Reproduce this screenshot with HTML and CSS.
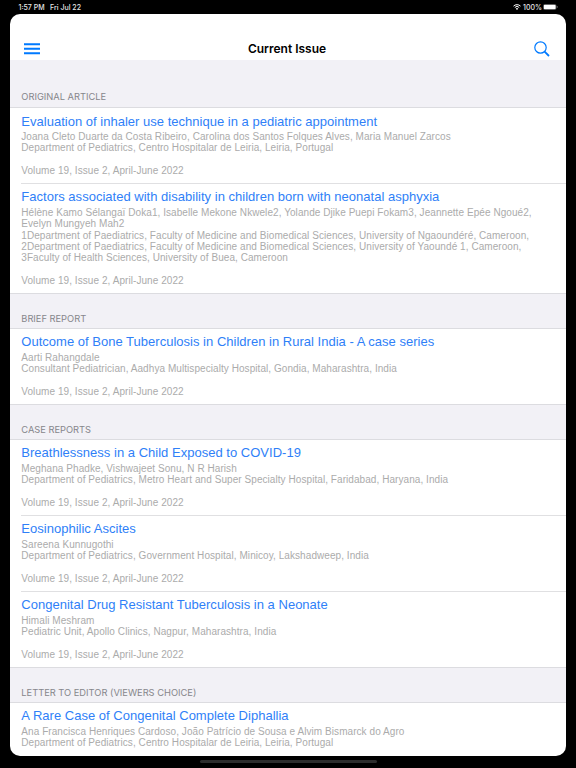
FILE: index.html
```html
<!DOCTYPE html>
<html lang="en">
  <head>
    <meta charset="utf-8" />
    <title>Current Issue</title>
    <link rel="stylesheet" href="styles.css">
  </head>
  <body>
    <div class="status-bar">
      <span class="time">1:57 PM</span>
      <span class="date">Fri Jul 22</span>
      <svg class="wifi" viewBox="0 0 16 12">
        <path d="M1 4.2a10 10 0 0 1 14 0M3.6 6.9a6.2 6.2 0 0 1 8.8 0" fill="none" stroke="#fff" stroke-width="2" />
        <path d="M8 11.8L5.6 9.3a3.4 3.4 0 0 1 4.8 0z" fill="#fff" />
      </svg>
      <span class="percent">100%</span>
      <svg class="battery" viewBox="0 0 15 6">
        <rect x="0.3" y="0.3" width="12.9" height="5.4" rx="1.6" fill="#000" stroke="#777" stroke-width="0.5" />
        <rect x="0.8" y="0.7" width="11.9" height="4.6" rx="1.1" fill="#fff" />
        <rect x="13.8" y="2" width="0.8" height="2" rx="0.4" fill="#777" />
      </svg>
    </div>
    <div class="screen">
      <header class="site-header">
        <svg class="menu-icon" viewBox="0 0 16 12">
          <path d="M0 1.3h16M0 5.8h16M0 10.3h16" />
        </svg>
        <h1 class="site-title">Current Issue</h1>
        <svg class="search-icon" viewBox="0 0 16 16">
          <circle cx="6.5" cy="6.5" r="5.7" />
          <path d="M10.6 10.6L15 15" class="handle" />
        </svg>
      </header>
      <main>
        <h2 class="section-title first">ORIGINAL ARTICLE</h2>
        <section class="articles">
          <article>
            <h3><a href="#">Evaluation of inhaler use technique in a pediatric appointment</a></h3>
            <p>Joana Cleto Duarte da Costa Ribeiro, Carolina dos Santos Folques Alves, Maria Manuel Zarcos<br>Department of Pediatrics, Centro Hospitalar de Leiria, Leiria, Portugal</p>
            <p class="issue">Volume 19, Issue 2, April-June 2022</p>
          </article>
          <article>
            <h3><a href="#">Factors associated with disability in children born with neonatal asphyxia</a></h3>
            <p>Hélène Kamo Sélangaï Doka1, Isabelle Mekone Nkwele2, Yolande Djike Puepi Fokam3, Jeannette Epée Ngoué2,<br>Evelyn Mungyeh Mah2<br>1Department of Paediatrics, Faculty of Medicine and Biomedical Sciences, University of Ngaoundéré, Cameroon,<br>2Department of Paediatrics, Faculty of Medicine and Biomedical Sciences, University of Yaoundé 1, Cameroon,<br>3Faculty of Health Sciences, University of Buea, Cameroon</p>
            <p class="issue">Volume 19, Issue 2, April-June 2022</p>
          </article>
        </section>
        <h2 class="section-title">BRIEF REPORT</h2>
        <section class="articles">
          <article>
            <h3><a href="#">Outcome of Bone Tuberculosis in Children in Rural India - A case series</a></h3>
            <p>Aarti Rahangdale<br>Consultant Pediatrician, Aadhya Multispecialty Hospital, Gondia, Maharashtra, India</p>
            <p class="issue">Volume 19, Issue 2, April-June 2022</p>
          </article>
        </section>
        <h2 class="section-title">CASE REPORTS</h2>
        <section class="articles">
          <article>
            <h3><a href="#">Breathlessness in a Child Exposed to COVID-19</a></h3>
            <p>Meghana Phadke, Vishwajeet Sonu, N R Harish<br>Department of Pediatrics, Metro Heart and Super Specialty Hospital, Faridabad, Haryana, India</p>
            <p class="issue">Volume 19, Issue 2, April-June 2022</p>
          </article>
          <article>
            <h3><a href="#">Eosinophilic Ascites</a></h3>
            <p>Sareena Kunnugothi<br>Department of Pediatrics, Government Hospital, Minicoy, Lakshadweep, India</p>
            <p class="issue">Volume 19, Issue 2, April-June 2022</p>
          </article>
          <article>
            <h3><a href="#">Congenital Drug Resistant Tuberculosis in a Neonate</a></h3>
            <p>Himali Meshram<br>Pediatric Unit, Apollo Clinics, Nagpur, Maharashtra, India</p>
            <p class="issue">Volume 19, Issue 2, April-June 2022</p>
          </article>
        </section>
        <h2 class="section-title">LETTER TO EDITOR (VIEWERS CHOICE)</h2>
        <section class="articles last">
          <article>
            <h3><a href="#">A Rare Case of Congenital Complete Diphallia</a></h3>
            <p>Ana Francisca Henriques Cardoso, João Patrício de Sousa e Alvim Bismarck do Agro<br>Department of Pediatrics, Centro Hospitalar de Leiria, Leiria, Portugal</p>
          </article>
        </section>
      </main>
    </div>
    <div class="home-bar"></div>
  </body>
</html>
```

FILE: styles.css
```css
* {
  box-sizing: border-box;
}
body,
h1,
h2,
h3,
p {
  margin: 0;
  padding: 0;
}
body {
  height: 768px;
  background-color: #000;
  overflow: hidden;
  font-family: "Liberation Sans", Arial, sans-serif;
}

.status-bar {
  display: flex;
  align-items: center;
  height: 14px;
  padding: 0 18px 0 18.5px;
  color: #e6e6e6;
  font-family: Inter, sans-serif;
  font-size: 7px;
  font-weight: 500;
}
.date {
  margin-left: 5.5px;
}
.wifi {
  width: 8px;
  height: 6px;
  margin-left: auto;
}
.percent {
  margin: 0 1px 0 2px;
}
.battery {
  width: 15px;
  height: 6px;
}

.screen {
  height: 741.5px;
  margin: 0 10px;
  border-radius: 10px;
  background-color: #fff;
  overflow: hidden;
}
.site-header {
  display: flex;
  align-items: flex-end;
  justify-content: space-between;
  height: 46px;
  padding: 0 15.6px 0 14.3px;
}
.site-title {
  font-family: Inter, sans-serif;
  font-size: 12px;
  font-weight: 600;
  line-height: 14px;
  margin-bottom: 4px;
}
.menu-icon {
  width: 16px;
  height: 12px;
  margin-left: -0.3px;
  margin-bottom: 5px;
  stroke: #007aff;
  stroke-width: 2;
}
.search-icon {
  width: 16px;
  height: 16px;
  margin-right: 0.4px;
  margin-bottom: 3px;
  fill: none;
  stroke: #007aff;
  stroke-width: 1.2;
}
.handle {
  stroke-width: 1.8;
}

.section-title {
  display: flex;
  align-items: flex-end;
  height: 34px;
  padding: 0 11.3px 3.2px;
  background-color: #f2f1f6;
  color: #86868b;
  font-family: Inter, sans-serif;
  font-size: 9.3px;
  font-weight: 400;
  line-height: 12px;
}
.section-title.first {
  height: 47px;
  padding-bottom: 4px;
}
.articles {
  border-top: 1px solid #dcdce0;
  border-bottom: 1px solid #dcdce0;
}
.articles.last {
  border-bottom: none;
}
article {
  margin-left: 11.3px;
  padding: 4.5px 0 6.6px;
}
article + article {
  border-top: 1px solid #e0e0e2;
}
h3 {
  margin-bottom: 0.7px;
  font-size: 13px;
  font-weight: normal;
  line-height: 18px;
  letter-spacing: 0.015px;
  white-space: nowrap;
}
h3 a {
  color: #2f7ff8;
  text-decoration: none;
}
p {
  color: #ababab;
  font-size: 10px;
  line-height: 11.3px;
  letter-spacing: 0.065px;
  white-space: nowrap;
}
.issue {
  margin-top: 11.3px;
}

.home-bar {
  width: 177px;
  height: 3px;
  margin: 4.5px auto 0;
  border-radius: 2px;
  background-color: #2d2d2d;
}
```
